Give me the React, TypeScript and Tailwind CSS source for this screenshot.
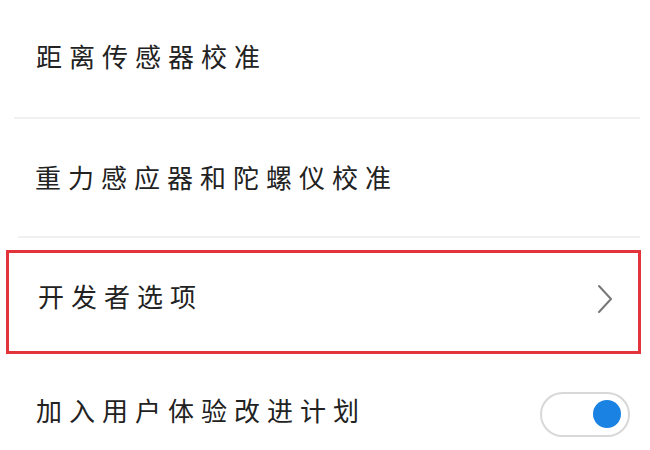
import React from "react";

const font = { fontFamily: '"Noto Sans CJK SC", "Noto Sans", sans-serif' };

const Row: React.FC<{ label: string; children?: React.ReactNode; className?: string; textClass?: string }> = ({
  label,
  children,
  className = "",
  textClass = "",
}) => (
  <div className={`flex items-center justify-between ${className}`}>
    <span className={`text-[26px] leading-none tracking-[7px] text-[#222] ${textClass}`}>{label}</span>
    {children}
  </div>
);

const App: React.FC = () => {
  return (
    <div className="w-[650px] h-[450px] bg-white overflow-hidden" style={font}>
      {/* Calibration rows */}
      <Row label="距离传感器校准" className="h-[117px] pl-[36px] pr-[20px] pb-[6px]" />
      <div className="ml-[14px] mr-[10px] h-[2px] bg-[#f0f0f0]" />
      <Row label="重力感应器和陀螺仪校准" className="h-[117px] pl-[35px] pr-[20px] pb-[2px]" />
      <div className="ml-[18px] mr-[10px] h-[2px] bg-[#f0f0f0]" />

      {/* Highlighted developer options */}
      <div className="mt-[12px] ml-[6px] mr-[9px] h-[104px] border-[3px] border-[#e2343a]">
        <Row label="开发者选项" className="h-full pl-[29px] pr-[25px] pb-[12px]">
          <svg width="16" height="30" viewBox="0 0 16 30" fill="none" className="mt-[6px]">
            <path d="M2 2 L14 15 L2 28" stroke="#777" strokeWidth="2" strokeLinecap="round" strokeLinejoin="round" />
          </svg>
        </Row>
      </div>

      {/* User experience toggle */}
      <Row label="加入用户体验改进计划" className="h-[96px] pl-[36px] pr-[20px] pt-[24px]" textClass="mb-[8px]">
        <div className="w-[90px] h-[45px] rounded-full border-[2px] border-[#d8d8d8] bg-white flex items-center justify-end pr-[7px]">
          <div className="w-[28px] h-[28px] rounded-full bg-[#1a82e2]" />
        </div>
      </Row>
    </div>
  );
};

export default App;
